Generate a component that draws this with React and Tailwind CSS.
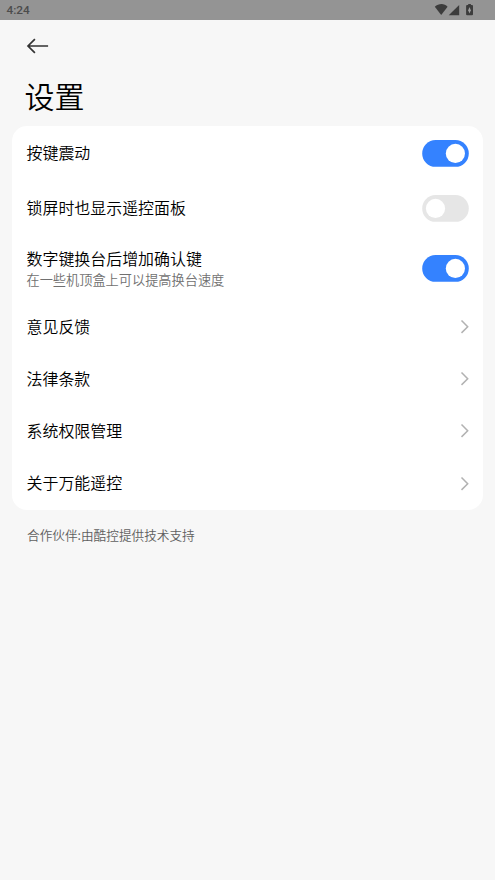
const toggles = [
  { label: "按键震动", on: true, height: "h-[55px]", pad: "pb-[3px]" },
  { label: "锁屏时也显示遥控面板", on: false, height: "h-[55px]", pad: "pb-[3px]" },
  {
    label: "数字键换台后增加确认键",
    note: "在一些机顶盒上可以提高换台速度",
    on: true,
    height: "h-[65px]",
    pad: "pb-[2px]",
  },
];

const links = ["意见反馈", "法律条款", "系统权限管理", "关于万能遥控"];

function Toggle({ on }) {
  return (
    <svg width="47" height="27" viewBox="0 0 47 27" role="switch" aria-checked={on}>
      <rect x="0.2" y="0.1" width="46.6" height="26.7" rx="13.35" fill={on ? "#3482ff" : "#e6e6e6"} />
      <circle cx={on ? 33.4 : 13.5} cy="13.45" r="9.6" fill="#fff" />
    </svg>
  );
}

function StatusBar() {
  return (
    <div className="flex h-5 items-center justify-between bg-[#949494] pr-[22px] pl-[6.5px] font-['Roboto',sans-serif] text-[11.8px] font-medium text-[#4c4c4c]">
      <span className="leading-5">4:24</span>
      <svg width="39" height="14" viewBox="0 0 39 14" fill="#3c3c3c">
        <path d="M.8 3.8C4.4.5 10.2-.1 13.6 3.8L7.2 12Z" />
        <path d="M25.2 2.1V12.2H14.7Z" />
        <path d="M34.2 2.1V1h2.7v1.1h1.1q1 0 1 1v8.1q0 1-1 1h-4.9q-1 0-1-1V3.1q0-1 1-1Z" />
        <path d="M35.5 4L34.2 7.2l1.3 3.4L36.8 7.2Z" fill="#a0a0a0" />
      </svg>
    </div>
  );
}

export default function App() {
  return (
    <div className="h-[880px] w-[495px] overflow-hidden bg-[#f7f7f7] font-['Noto_Sans_CJK_SC',sans-serif] font-[350] text-black">
      <StatusBar />
      <header className="flex h-[106px] flex-col pt-[17px] pl-[25px]">
        <svg width="26" height="18" viewBox="0 0 26 18" fill="none" stroke="#333" strokeWidth="1.7">
          <path d="M23.1 9H3.2M9.9 2.1L3 9l6.9 6.9" />
        </svg>
        <h1 className="mt-[18px] -ml-[0.5px] text-[30px] leading-[44px] font-[350]">设置</h1>
      </header>
      <main className="mr-[11.8px] ml-[11.5px] h-[384px] rounded-[15px] bg-white pr-[14.2px] pl-[15px]">
        {toggles.map((t) => (
          <div key={t.label} className={`flex items-center justify-between ${t.height}`}>
            <div className={t.pad}>
              <div className="text-[15.95px] leading-[22px]">{t.label}</div>
              {t.note && <div className="mt-px text-[13.2px] leading-[19px] text-[#707070]">{t.note}</div>}
            </div>
            <Toggle on={t.on} />
          </div>
        ))}
        {links.map((label) => (
          <div key={label} className="flex h-[52.2px] items-center justify-between text-[15.95px] leading-[22px]">
            <span className="pb-[3px]">{label}</span>
            <svg width="9" height="14" viewBox="0 0 9 14" fill="none" stroke="#b2b2b2" strokeWidth="1.5">
              <path d="M1.5 .5L7.7 6.7l-6.2 6.2" />
            </svg>
          </div>
        ))}
      </main>
      <footer className="pt-[15px] pl-[27px] text-[12.65px] leading-5 text-[#606060]">
        合作伙伴:由酷控提供技术支持
      </footer>
    </div>
  );
}
